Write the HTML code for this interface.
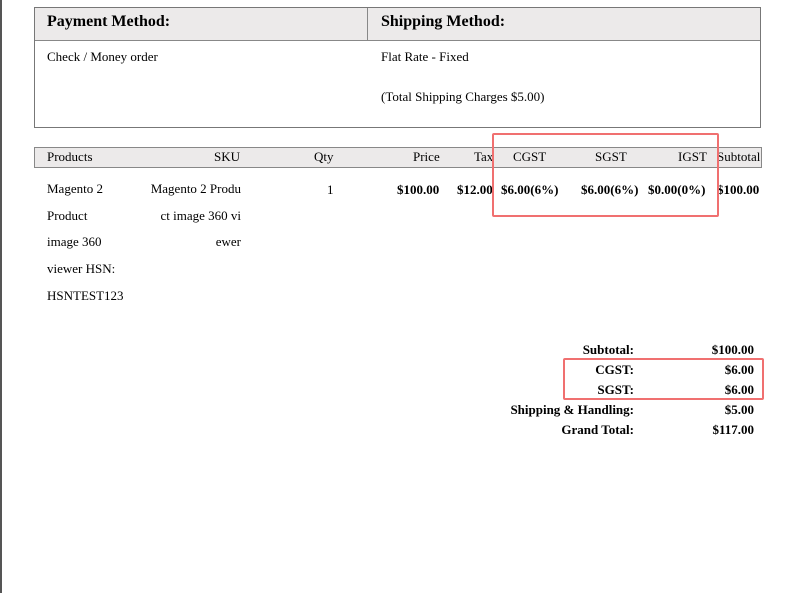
<!DOCTYPE html>
<html><head><style>
body{margin:0;width:790px;height:593px;background:#fff;position:relative;overflow:hidden;font-family:"Liberation Serif",serif;font-size:13px;color:#000}
.a{position:absolute;white-space:nowrap}
.b{font-weight:bold}
.r{text-align:right}
</style></head><body>
<div class="a" style="left:0;top:0;width:2px;height:593px;background:#555"></div>
<div class="a" style="left:34px;top:7px;width:725px;height:119px;border:1px solid #777"></div>
<div class="a" style="left:35px;top:8px;width:725px;height:32px;background:#ECEAEA;border-bottom:1px solid #888"></div>
<div class="a" style="left:367px;top:8px;width:1px;height:33px;background:#888"></div>
<div class="a b" style="left:47px;top:13px;font-size:16px">Payment Method:</div>
<div class="a b" style="left:381px;top:13px;font-size:16px">Shipping Method:</div>
<div class="a" style="left:47px;top:49px">Check / Money order</div>
<div class="a" style="left:381px;top:49px">Flat Rate - Fixed</div>
<div class="a" style="left:381px;top:89px">(Total Shipping Charges $5.00)</div>

<div class="a" style="left:34px;top:147px;width:726px;height:19px;background:#ECEAEA;border:1px solid #888"></div>
<div class="a" style="left:47px;top:149px">Products</div>
<div class="a" style="left:214px;top:149px">SKU</div>
<div class="a" style="left:314px;top:149px">Qty</div>
<div class="a" style="left:413px;top:149px">Price</div>
<div class="a" style="left:474px;top:149px">Tax</div>
<div class="a" style="left:513px;top:149px">CGST</div>
<div class="a" style="left:595px;top:149px">SGST</div>
<div class="a" style="left:678px;top:149px">IGST</div>
<div class="a" style="left:717px;top:149px">Subtotal</div>

<div class="a" style="left:47px;top:176px;line-height:26.7px;white-space:normal">Magento 2<br>Product<br>image 360<br>viewer HSN:<br>HSNTEST123</div>
<div class="a r" style="left:140px;top:176px;width:101px;line-height:26.7px">Magento 2 Produ<br>ct image 360 vi<br>ewer</div>
<div class="a" style="left:327px;top:182px">1</div>
<div class="a b" style="left:397px;top:182px">$100.00</div>
<div class="a b" style="left:457px;top:182px">$12.00</div>
<div class="a b" style="left:501px;top:182px">$6.00(6%)</div>
<div class="a b" style="left:581px;top:182px">$6.00(6%)</div>
<div class="a b" style="left:648px;top:182px">$0.00(0%)</div>
<div class="a b" style="left:717px;top:182px">$100.00</div>

<div class="a" style="left:492px;top:133px;width:223px;height:80px;border:2px solid #f07070;border-radius:2px"></div>

<div class="a b r" style="left:434px;top:340px;width:200px;line-height:20px">Subtotal:<br>CGST:<br>SGST:<br>Shipping &amp; Handling:<br>Grand Total:</div>
<div class="a b r" style="left:654px;top:340px;width:100px;line-height:20px">$100.00<br>$6.00<br>$6.00<br>$5.00<br>$117.00</div>
<div class="a" style="left:563px;top:358px;width:197px;height:38px;border:2px solid #f07070;border-radius:2px"></div>
</body></html>
